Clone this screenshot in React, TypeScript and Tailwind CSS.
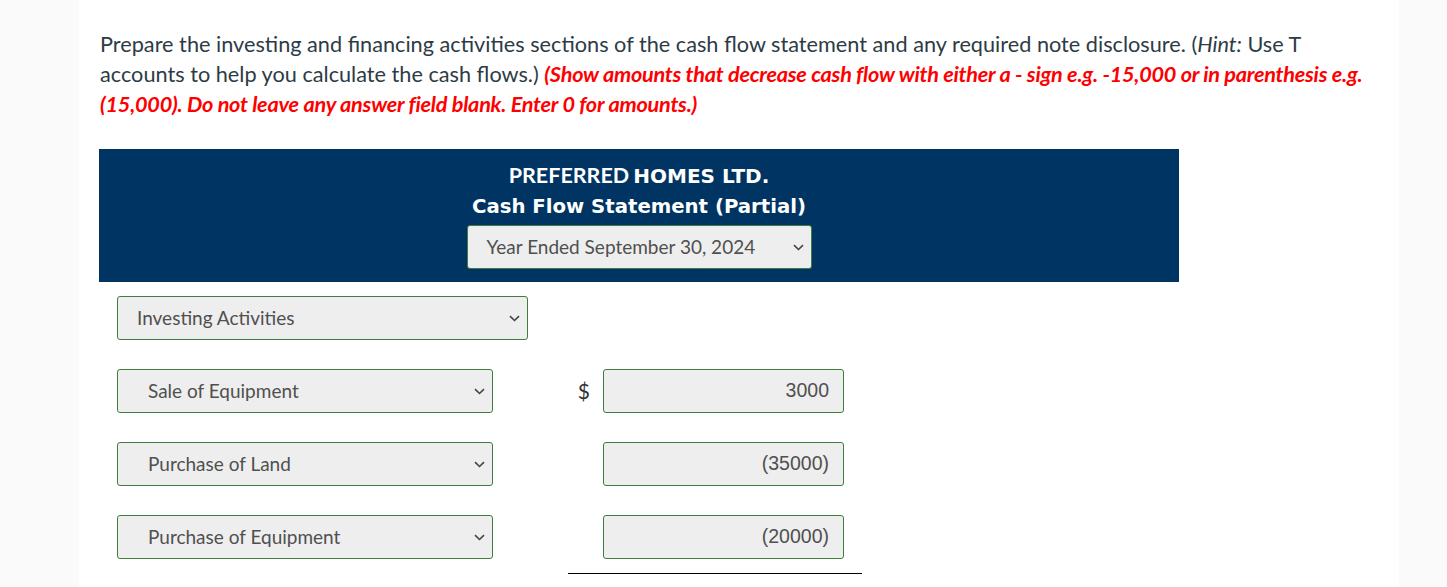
import React from 'react';

const lato = { fontFamily: 'Lato, "Noto Sans", sans-serif' };

function Chevron() {
  return (
    <svg width="11" height="7" viewBox="0 0 11 7" fill="none" className="shrink-0">
      <path d="M1 1.2 L5.5 5.5 L10 1.2" stroke="#444" strokeWidth="1.6" />
    </svg>
  );
}

function Dropdown({ label, width, indent }: { label: string; width: string; indent: string }) {
  return (
    <div
      className={`${width} h-[44px] flex items-center justify-between rounded-[3px] border border-[#3f7d3f] bg-[#eeeeee] pr-[7px] ${indent} text-[19px] text-[#505050] font-[Lato,sans-serif]`}
    >
      <span>{label}</span>
      <Chevron />
    </div>
  );
}

const ROWS = [
  { label: 'Sale of Equipment', amount: '3000', dollar: true },
  { label: 'Purchase of Land', amount: '(35000)', dollar: false },
  { label: 'Purchase of Equipment', amount: '(20000)', dollar: false },
];

export default function App() {
  return (
    <div className="min-h-[587px] bg-[#fafafa]">
      <div className="ml-[79px] w-[1320px] min-h-[587px] bg-white">
        <p className="pt-[29px] pl-[21px] pr-[30px] text-[21.7px] leading-[30px] text-[#2d3b45]" style={lato}>
          Prepare the investing and financing activities sections of the cash flow statement and any required note disclosure. (
          <i>Hint:</i> Use T accounts to help you calculate the cash flows.){' '}
          <b className="italic text-[#ff0000] tracking-[-0.25px]">
            (Show amounts that decrease cash flow with either a - sign e.g. -15,000 or in parenthesis e.g. (15,000). Do not leave any answer field blank. Enter 0 for amounts.)
          </b>
        </p>

        <div className="mt-[30px] ml-[20px] w-[1080px] h-[133px] bg-[#003462] flex flex-col items-center pt-[11px] text-white">
          <div className="leading-[30px] font-bold">
            <span className="text-[21.5px]" style={lato}>PREFERRED</span>{' '}
            <span className="font-[DejaVu_Sans,sans-serif] text-[20px]">HOMES LTD.</span>
          </div>
          <div className="text-[19.7px] leading-[30px] font-bold font-[DejaVu_Sans,sans-serif]">
            Cash Flow Statement (Partial)
          </div>
          <div className="mt-[3px]">
            <Dropdown label="Year Ended September 30, 2024" width="w-[345px]" indent="pl-[19px]" />
          </div>
        </div>

        <div className="mt-[14px] ml-[38px]">
          <Dropdown label="Investing Activities" width="w-[411px]" indent="pl-[19px]" />
        </div>

        {ROWS.map((r) => (
          <div key={r.label} className="mt-[29px] ml-[38px] flex items-center">
            <Dropdown label={r.label} width="w-[376px]" indent="pl-[30px]" />
            <div className="w-[110px] pr-[13px] text-right text-[21px] text-[#333]" style={lato}>
              {r.dollar ? '$' : ''}
            </div>
            <div className="w-[241px] h-[44px] flex items-center justify-end rounded-[3px] border border-[#3f7d3f] bg-[#eeeeee] pr-[14px] text-[19.5px] text-[#505050] font-[Liberation_Sans,Arial,sans-serif]">
              {r.amount}
            </div>
          </div>
        ))}

        <div className="mt-[14px] ml-[489px] w-[294px] border-t border-black" />
      </div>
    </div>
  );
}
